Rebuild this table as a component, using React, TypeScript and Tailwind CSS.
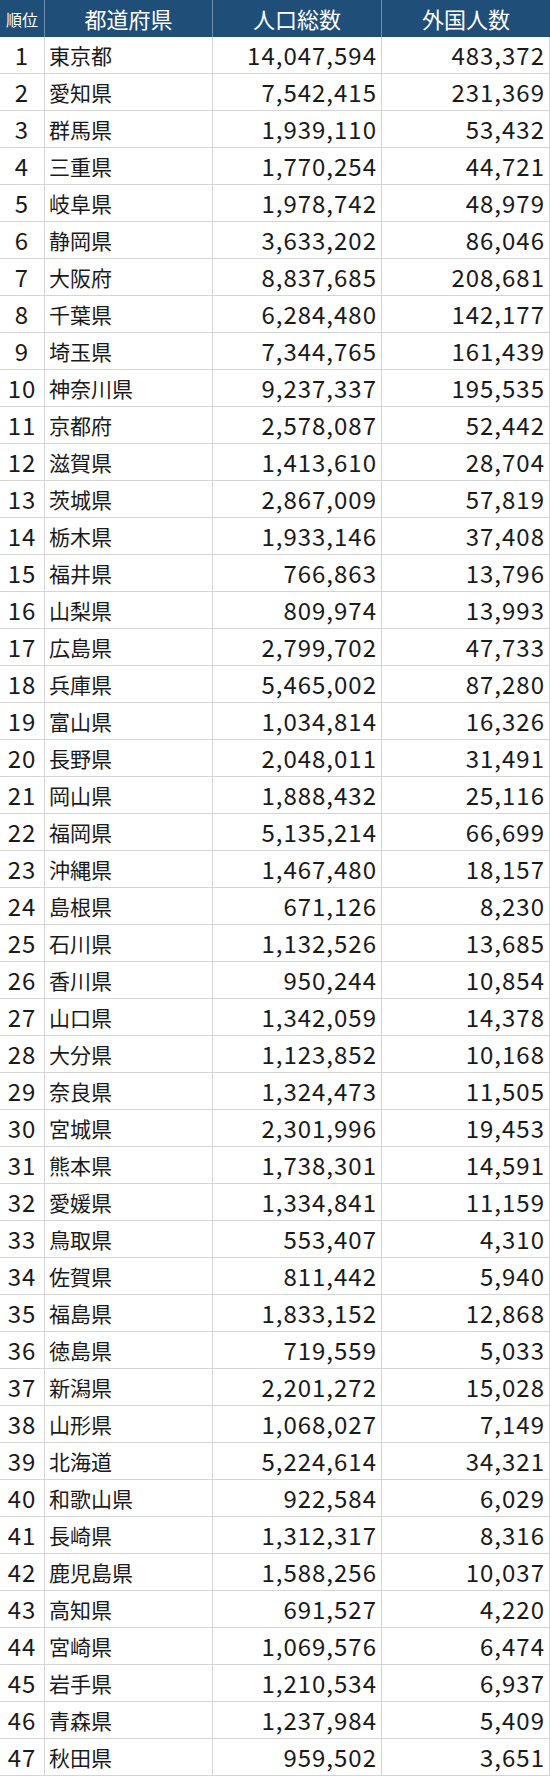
import React from "react";

const data: [string, string, string][] = [
  ["東京都", "14,047,594", "483,372"],
  ["愛知県", "7,542,415", "231,369"],
  ["群馬県", "1,939,110", "53,432"],
  ["三重県", "1,770,254", "44,721"],
  ["岐阜県", "1,978,742", "48,979"],
  ["静岡県", "3,633,202", "86,046"],
  ["大阪府", "8,837,685", "208,681"],
  ["千葉県", "6,284,480", "142,177"],
  ["埼玉県", "7,344,765", "161,439"],
  ["神奈川県", "9,237,337", "195,535"],
  ["京都府", "2,578,087", "52,442"],
  ["滋賀県", "1,413,610", "28,704"],
  ["茨城県", "2,867,009", "57,819"],
  ["栃木県", "1,933,146", "37,408"],
  ["福井県", "766,863", "13,796"],
  ["山梨県", "809,974", "13,993"],
  ["広島県", "2,799,702", "47,733"],
  ["兵庫県", "5,465,002", "87,280"],
  ["富山県", "1,034,814", "16,326"],
  ["長野県", "2,048,011", "31,491"],
  ["岡山県", "1,888,432", "25,116"],
  ["福岡県", "5,135,214", "66,699"],
  ["沖縄県", "1,467,480", "18,157"],
  ["島根県", "671,126", "8,230"],
  ["石川県", "1,132,526", "13,685"],
  ["香川県", "950,244", "10,854"],
  ["山口県", "1,342,059", "14,378"],
  ["大分県", "1,123,852", "10,168"],
  ["奈良県", "1,324,473", "11,505"],
  ["宮城県", "2,301,996", "19,453"],
  ["熊本県", "1,738,301", "14,591"],
  ["愛媛県", "1,334,841", "11,159"],
  ["鳥取県", "553,407", "4,310"],
  ["佐賀県", "811,442", "5,940"],
  ["福島県", "1,833,152", "12,868"],
  ["徳島県", "719,559", "5,033"],
  ["新潟県", "2,201,272", "15,028"],
  ["山形県", "1,068,027", "7,149"],
  ["北海道", "5,224,614", "34,321"],
  ["和歌山県", "922,584", "6,029"],
  ["長崎県", "1,312,317", "8,316"],
  ["鹿児島県", "1,588,256", "10,037"],
  ["高知県", "691,527", "4,220"],
  ["宮崎県", "1,069,576", "6,474"],
  ["岩手県", "1,210,534", "6,937"],
  ["青森県", "1,237,984", "5,409"],
  ["秋田県", "959,502", "3,651"],
];

const font = "font-['Noto_Sans_CJK_JP','Noto_Sans',sans-serif]";

export default function App() {
  return (
    <div className={`w-[550px] bg-white text-[#1a1a1a] font-normal ${font}`}>
      <div className="grid grid-cols-[45px_168px_169px_168px] h-[37px] bg-[#1f4e79] text-white">
        <div className="flex items-center justify-center border-r border-[#6f8fae] text-[16px]">順位</div>
        <div className="flex items-center justify-center border-r border-[#6f8fae] text-[22px]">都道府県</div>
        <div className="flex items-center justify-center border-r border-[#6f8fae] text-[22px]">人口総数</div>
        <div className="flex items-center justify-center text-[22px]">外国人数</div>
      </div>
      {data.map(([pref, pop, foreign], i) => (
        <div
          key={pref}
          className="grid grid-cols-[45px_168px_169px_168px] h-[37px] border-b border-[#d4d4d4]"
        >
          <div className="flex items-center justify-center border-r border-[#d4d4d4] text-[24px] tracking-[1px] leading-none">
            {i + 1}
          </div>
          <div className="flex items-center pl-[4px] border-r border-[#d4d4d4] text-[21px] leading-none whitespace-nowrap">
            {pref}
          </div>
          <div className="flex items-center justify-end pr-[4px] border-r border-[#d4d4d4] text-[24px] tracking-[1px] leading-none">
            {pop}
          </div>
          <div className="flex items-center justify-end pr-[4px] border-r border-[#d4d4d4] text-[24px] tracking-[1px] leading-none">
            {foreign}
          </div>
        </div>
      ))}
    </div>
  );
}
